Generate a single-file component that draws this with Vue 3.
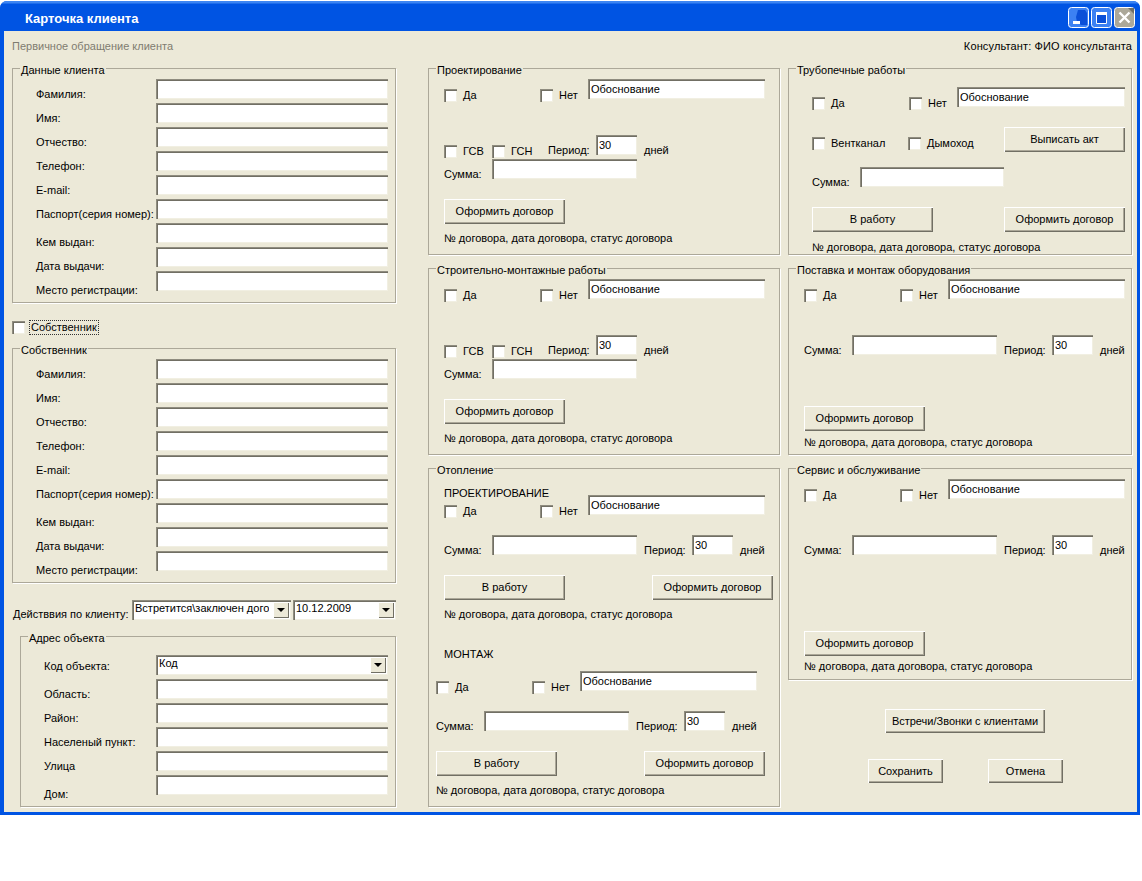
<script setup>
const clientRows = [
  { label: "Фамилия:" },
  { label: "Имя:" },
  { label: "Отчество:" },
  { label: "Телефон:" },
  { label: "E-mail:" },
  { label: "Паспорт(серия номер):" },
  { label: "Кем выдан:", low: true },
  { label: "Дата выдачи:", low: true },
  { label: "Место регистрации:", low: true }
];
const addressRows = [
  { label: "Область:" },
  { label: "Район:" },
  { label: "Населеный пункт:" },
  { label: "Улица" },
  { label: "Дом:", low: true }
];
const contractGroups = ["Проектирование", "Строительно-монтажные работы"];
const serviceGroups = [
  { title: "Поставка и монтаж оборудования", cls: "supply" },
  { title: "Сервис и обслуживание", cls: "service" }
];
const heatingParts = [
  { title: "ПРОЕКТИРОВАНИЕ", cls: "design" },
  { title: "МОНТАЖ", cls: "mount" }
];
const status = "№ договора, дата договора, статус договора";
</script>

<template>
  <div class="window">
    <header class="titlebar">
      <span class="title">Карточка клиента</span>
      <div class="controls">
        <svg class="ctl" width="21" height="21" viewBox="0 0 21 21">
          <rect x="0.5" y="0.5" width="20" height="20" rx="3" fill="#3c81f3" stroke="#fff" />
          <path d="M10 3h7l2 3v12h-6l-4-3-1-5z" fill="#0a4fd8" />
          <rect x="5" y="14" width="7" height="3" fill="#fff" />
        </svg>
        <svg class="ctl" width="21" height="21" viewBox="0 0 21 21">
          <rect x="0.5" y="0.5" width="20" height="20" rx="3" fill="#3c81f3" stroke="#fff" />
          <rect x="5" y="6" width="11" height="11" fill="#0a4fd8" />
          <path d="M5.5 6.5h10v10h-10z" fill="none" stroke="#fff" />
          <rect x="5" y="5" width="11" height="3" fill="#fff" />
        </svg>
        <svg class="ctl" width="21" height="21" viewBox="0 0 21 21">
          <rect x="0.5" y="0.5" width="20" height="20" rx="3" fill="#aca899" stroke="#fff" />
          <path d="M14 1h6v6z" fill="#716f64" />
          <path d="M5.5 5.5l10 10M15.5 5.5l-10 10" stroke="#fff" stroke-width="2.4" />
        </svg>
      </div>
    </header>

    <main class="client">
      <div class="topline">
        <span class="muted">Первичное обращение клиента</span>
        <span class="consultant">Консультант: ФИО консультанта</span>
      </div>

      <div class="columns">
        <section class="col col-left">
          <div class="group person">
            <span class="legend">Данные клиента</span>
            <div v-for="row in clientRows" :key="row.label" class="form-row">
              <label :class="{ low: row.low }">{{ row.label }}</label>
              <input class="field" readonly />
            </div>
          </div>

          <div class="owner-check">
            <input class="cb" type="checkbox" />
            <span class="focus">Собственник</span>
          </div>

          <div class="group person">
            <span class="legend">Собственник</span>
            <div v-for="row in clientRows" :key="row.label" class="form-row">
              <label :class="{ low: row.low }">{{ row.label }}</label>
              <input class="field" readonly />
            </div>
          </div>

          <div class="actions-row">
            <span class="actions-label">Действвия по клиенту:</span>
            <div class="combo action-combo">
              <span class="combo-text">Встретится\заключен дого</span>
              <span class="arrow"></span>
            </div>
            <div class="combo date-combo">
              <span class="combo-text">10.12.2009</span>
              <span class="arrow"></span>
            </div>
          </div>

          <div class="group address">
            <span class="legend">Адрес объекта</span>
            <div class="form-row">
              <label class="code">Код объекта:</label>
              <div class="combo code-combo">
                <span class="combo-text">Код</span>
                <span class="arrow"></span>
              </div>
            </div>
            <div v-for="row in addressRows" :key="row.label" class="form-row">
              <label :class="{ low: row.low }">{{ row.label }}</label>
              <input class="field" readonly />
            </div>
          </div>
        </section>

        <section class="col col-mid">
          <div v-for="name in contractGroups" :key="name" class="group contract">
            <span class="legend">{{ name }}</span>
            <div class="row">
              <span class="check yes"><input class="cb" type="checkbox" />Да</span>
              <span class="check no"><input class="cb" type="checkbox" />Нет</span>
              <input class="field reason" value="Обоснование" readonly />
            </div>
            <div class="row gap-36">
              <span class="check w48"><input class="cb" type="checkbox" />ГСВ</span>
              <span class="check w56"><input class="cb" type="checkbox" />ГСН</span>
              <span class="lab w48">Период:</span>
              <input class="field days-input" value="30" readonly />
              <span class="lab days">дней</span>
            </div>
            <div class="row gap-4">
              <span class="lab w48">Сумма:</span>
              <input class="field sum-input" readonly />
            </div>
            <button class="btn gap-20" type="button">Оформить договор</button>
            <div class="status">{{ status }}</div>
          </div>

          <div class="group heating">
            <span class="legend">Отопление</span>
            <div v-for="part in heatingParts" :key="part.title" :class="['part', part.cls]">
              <div class="part-title">{{ part.title }}</div>
              <div class="row part-first">
                <span class="check yes"><input class="cb" type="checkbox" />Да</span>
                <span class="check no"><input class="cb" type="checkbox" />Нет</span>
                <input class="field reason" value="Обоснование" readonly />
              </div>
              <div class="row gap-20">
                <span class="lab w48">Сумма:</span>
                <input class="field sum-input" readonly />
                <span class="lab per w48">Период:</span>
                <input class="field days-input" value="30" readonly />
                <span class="lab days">дней</span>
              </div>
              <div class="row btn-row gap-20">
                <button class="btn" type="button">В работу</button>
                <button class="btn push-87" type="button">Оформить договор</button>
              </div>
              <div class="status">{{ status }}</div>
            </div>
          </div>
        </section>

        <section class="col col-right">
          <div class="group pipes">
            <span class="legend">Трубопечные работы</span>
            <div class="row">
              <span class="check yes-97"><input class="cb" type="checkbox" />Да</span>
              <span class="check no"><input class="cb" type="checkbox" />Нет</span>
              <input class="field reason-short" value="Обоснование" readonly />
            </div>
            <div class="row btn-row gap-20">
              <span class="check w96"><input class="cb" type="checkbox" />Вентканал</span>
              <span class="check w96"><input class="cb" type="checkbox" />Дымоход</span>
              <button class="btn" type="button">Выписать акт</button>
            </div>
            <div class="row gap-15">
              <span class="lab w48">Сумма:</span>
              <input class="field sum-short" readonly />
            </div>
            <div class="row btn-row gap-20">
              <button class="btn" type="button">В работу</button>
              <button class="btn push-71" type="button">Оформить договор</button>
            </div>
            <div class="status">{{ status }}</div>
          </div>

          <div v-for="item in serviceGroups" :key="item.title" :class="['group', 'supply-group', item.cls]">
            <span class="legend">{{ item.title }}</span>
            <div class="row">
              <span class="check yes"><input class="cb" type="checkbox" />Да</span>
              <span class="check no"><input class="cb" type="checkbox" />Нет</span>
              <input class="field reason" value="Обоснование" readonly />
            </div>
            <div class="row gap-36">
              <span class="lab w48">Сумма:</span>
              <input class="field sum-input" readonly />
              <span class="lab per w48">Период:</span>
              <input class="field days-input" value="30" readonly />
              <span class="lab days">дней</span>
            </div>
            <button class="btn make" type="button">Оформить договор</button>
            <div class="status">{{ status }}</div>
          </div>

          <button class="btn calls" type="button">Встречи/Звонки с клиентами</button>
          <div class="row save-row">
            <button class="btn small" type="button">Сохранить</button>
            <button class="btn small" type="button">Отмена</button>
          </div>
        </section>
      </div>
    </main>
  </div>
</template>

<style>
html,
body {
  background: #fff;
}
</style>

<style scoped>
.window {
  width: 1140px;
  height: 814px;
  margin-top: 1px;
  background: #0054e3;
  border-radius: 7px 7px 0 0;
  box-sizing: border-box;
  padding: 0 3px 3px 4px;
  display: flex;
  flex-direction: column;
  font: 11px/13px "Liberation Sans", sans-serif;
  color: #000;
}

.titlebar {
  height: 30px;
  flex: none;
  margin: 0 -3px 0 -4px;
  padding: 6px 5px 0 25px;
  box-sizing: border-box;
  display: flex;
  justify-content: space-between;
  border-radius: 7px 7px 0 0;
  background: linear-gradient(#3d85f2 0, #3d85f2 2px, #0054e3 3px);
}

.title {
  color: #fff;
  font: bold 13px/24px "Liberation Sans", sans-serif;
}

.controls {
  display: flex;
  gap: 2px;
}

.ctl {
  display: block;
}

.client {
  flex: 1;
  background: #ece9d8;
  padding: 9px 5px 0 8px;
}

.topline {
  display: flex;
  justify-content: space-between;
  height: 13px;
}

.muted {
  color: #7f7c70;
}

.consultant {
  letter-spacing: 0.14px;
}

.columns {
  display: flex;
  margin-top: 15px;
}

.col {
  flex: none;
}

.col-left {
  width: 384px;
}

.col-mid {
  width: 352px;
  margin-left: 32px;
}

.col-right {
  width: 344px;
  margin-left: 8px;
}

.group {
  position: relative;
  box-sizing: border-box;
  border: 1px solid #aca899;
  box-shadow: 1px 1px 0 #fff;
}

.legend {
  position: absolute;
  top: -5px;
  left: 7px;
  padding: 0 1px;
  background: #ece9d8;
  white-space: nowrap;
}

.person {
  padding: 10px 7px 11px 23px;
}

.address {
  margin: 16px 0 0 8px;
  padding: 18px 7px 11px 23px;
}

.form-row {
  display: grid;
  grid-template-columns: 120px 232px;
  height: 20px;
  margin-bottom: 4px;
}

.form-row:last-child {
  margin-bottom: 0;
}

.form-row label {
  margin-top: 9px;
  white-space: nowrap;
}

.form-row label.low {
  margin-top: 13px;
}

.form-row label.code {
  margin-top: 5px;
}

.address .form-row {
  grid-template-columns: 112px 232px;
}

.field,
.combo {
  box-sizing: border-box;
  height: 20px;
  border: 0;
  outline: 0;
  margin: 0;
  padding: 2px 3px 3px;
  background: #fff;
  font: inherit;
  color: #000;
  box-shadow:
    inset 1px 1px 0 #8f8c7f,
    inset 2px 2px 0 #716f64,
    inset -1px -1px 0 #f1efe2;
}

.field {
  width: 100%;
}

.owner-check {
  display: flex;
  align-items: center;
  height: 20px;
  margin: 14px 0 11px;
}

.cb {
  appearance: none;
  flex: none;
  width: 13px;
  height: 13px;
  margin: 0;
  background: #fff;
  box-shadow:
    inset 1px 1px 0 #8f8c7f,
    inset 2px 2px 0 #716f64,
    inset -1px -1px 0 #f1efe2;
}

.focus {
  margin-left: 5px;
  padding: 0 1px;
  outline: 1px dotted #333;
}

.actions-row {
  display: flex;
  height: 20px;
  margin-top: 17px;
}

.actions-label {
  width: 119px;
  margin-left: 1px;
  flex: none;
  margin-top: 8px;
  white-space: nowrap;
}

.combo {
  display: flex;
  align-items: flex-start;
  justify-content: space-between;
  padding: 2px 2px 1px 3px;
}

.combo-text {
  white-space: nowrap;
  overflow: hidden;
}

.action-combo {
  width: 159px;
  margin-right: 2px;
}

.date-combo {
  width: 103px;
}

.code-combo {
  width: 232px;
}

.arrow {
  position: relative;
  flex: none;
  width: 16px;
  height: 16px;
  background: #ece9d8;
  box-shadow:
    inset 1px 1px 0 #fff,
    inset -1px -1px 0 #716f64;
}

.arrow::after {
  content: "";
  position: absolute;
  left: 4px;
  top: 6px;
  border: 4px solid transparent;
  border-top: 4px solid #000;
  border-bottom: 0;
}

.contract {
  height: 187px;
  margin-bottom: 13px;
  padding: 10px 0 0 15px;
}

.heating {
  height: 339px;
  padding: 17px 0 0 15px;
}

.pipes {
  height: 187px;
  margin-bottom: 13px;
  padding: 18px 0 0 23px;
}

.supply-group {
  margin-bottom: 0;
  padding: 10px 0 0 15px;
}

.supply {
  height: 187px;
  margin-bottom: 13px;
}

.service {
  height: 212px;
}

.row {
  display: flex;
  align-items: flex-start;
  height: 20px;
}

.btn-row {
  height: 25px;
}

.check {
  display: flex;
  gap: 6px;
  flex: none;
  margin-top: 10px;
  white-space: nowrap;
}

.yes {
  width: 96px;
}

.yes-97 {
  width: 97px;
}

.no,
.w48 {
  width: 48px;
  flex: none;
}

.w56 {
  width: 56px;
  flex: none;
}

.w96 {
  width: 96px;
}

.lab {
  margin-top: 9px;
  white-space: nowrap;
}

.per,
.days {
  margin-left: 7px;
}

.reason {
  width: 177px;
}

.reason-short {
  width: 168px;
}

.days-input {
  width: 41px;
}

.sum-input {
  width: 145px;
}

.sum-short {
  width: 144px;
}

.gap-36 {
  margin-top: 36px;
}

.gap-20 {
  margin-top: 20px;
}

.gap-15 {
  margin-top: 15px;
}

.gap-4 {
  margin-top: 4px;
}

.btn {
  display: block;
  flex: none;
  box-sizing: border-box;
  width: 121px;
  height: 25px;
  padding: 0;
  border: 0;
  background: #ece9d8;
  font: inherit;
  color: #000;
  box-shadow:
    inset 1px 1px 0 #fff,
    inset -1px -1px 0 #716f64,
    inset -2px -2px 0 #aca899;
}

.push-87 {
  margin-left: 87px;
}

.push-71 {
  margin-left: 71px;
}

.status {
  margin-top: 8px;
  white-space: nowrap;
}

.part-title {
  height: 14px;
  line-height: 14px;
}

.design .part-first {
  margin-top: -5px;
}

.mount {
  margin: 26px 0 0 -8px;
}

.mount .part-title {
  margin-left: 8px;
}

.mount .part-first {
  margin-top: 10px;
}

.make {
  margin-top: 51px;
}

.supply .status {
  margin-top: 5px;
}

.service .make {
  margin-top: 76px;
}

.service .status {
  margin-top: 4px;
}

.pipes .status {
  margin-top: 9px;
}

.calls {
  width: 160px;
  height: 24px;
  margin: 29px 0 0 97px;
}

.save-row {
  margin: 26px 0 0 80px;
  gap: 45px;
  height: 24px;
}

.small {
  width: 75px;
  height: 24px;
}
</style>
